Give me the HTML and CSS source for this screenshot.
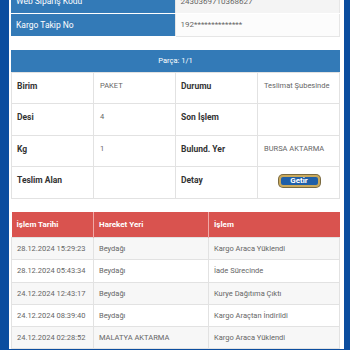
FILE: index.html
```html
<!DOCTYPE html>
<html lang="tr">
<head>
    <meta charset="UTF-8">
    <meta name="viewport" content="width=device-width, initial-scale=1.0">
    <title>Kargo Takip</title>
    <link rel="stylesheet" href="styles.css">
</head>
<body>
    <div class="page">
        <table class="info-table">
            <tr>
                <th>Web Sipariş Kodu</th>
                <td>2430369710368627</td>
            </tr>
            <tr>
                <th>Kargo Takip No</th>
                <td>192**************</td>
            </tr>
        </table>

        <div class="panel">
            <div class="panel-head">Parça: 1/1</div>
            <table class="part-table">
                <tr>
                    <th>Birim</th>
                    <td>PAKET</td>
                    <th>Durumu</th>
                    <td>Teslimat Şubesinde</td>
                </tr>
                <tr>
                    <th>Desi</th>
                    <td>4</td>
                    <th>Son İşlem</th>
                    <td></td>
                </tr>
                <tr>
                    <th>Kg</th>
                    <td>1</td>
                    <th>Bulund. Yer</th>
                    <td>BURSA AKTARMA</td>
                </tr>
                <tr>
                    <th>Teslim Alan</th>
                    <td></td>
                    <th>Detay</th>
                    <td class="btn-cell"><button class="getir-btn">Getir</button></td>
                </tr>
            </table>
        </div>

        <table class="moves-table">
            <thead>
                <tr>
                    <th class="col-date">İşlem Tarihi</th>
                    <th class="col-place">Hareket Yeri</th>
                    <th>İşlem</th>
                </tr>
            </thead>
            <tbody>
                <tr>
                    <td>28.12.2024 15:29:23</td>
                    <td>Beydağı</td>
                    <td>Kargo Araca Yüklendi</td>
                </tr>
                <tr>
                    <td>28.12.2024 05:43:34</td>
                    <td>Beydağı</td>
                    <td>İade Sürecinde</td>
                </tr>
                <tr>
                    <td>24.12.2024 12:43:17</td>
                    <td>Beydağı</td>
                    <td>Kurye Dağıtıma Çıktı</td>
                </tr>
                <tr>
                    <td>24.12.2024 08:39:40</td>
                    <td>Beydağı</td>
                    <td>Kargo Araçtan İndirildi</td>
                </tr>
                <tr>
                    <td>24.12.2024 02:28:52</td>
                    <td>MALATYA AKTARMA</td>
                    <td>Kargo Araca Yüklendi</td>
                </tr>
            </tbody>
        </table>
    </div>
</body>
</html>
```

FILE: styles.css
```css
:root {
    --frame: #0b4d9f;
    --blue: #337ab7;
    --red: #d9534f;
    --line: #e2e2e2;
    --label: #333;
    --value: #666;
}

* {
    box-sizing: border-box;
    margin: 0;
    padding: 0;
}

html, body {
    height: 100%;
}

body {
    background: var(--frame);
    font-family: Roboto, "Noto Sans", sans-serif;
    overflow: hidden;
}

.page {
    margin-left: 9px;
    width: 335px;
    min-height: 100%;
    background: #fff;
    padding: 0 4px 0 2px;
    margin-top: -10px;
}

table {
    width: 100%;
    border-collapse: collapse;
    table-layout: fixed;
}

/* top info */
.info-table th,
.info-table td {
    height: 23px;
    font-size: 8px;
    text-align: left;
    padding: 0 5px;
    border-bottom: 1px solid #fff;
}

.info-table th {
    width: 164px;
    background: var(--blue);
    color: #fff;
    font-weight: 400;
    font-size: 8.5px;
}

.info-table td {
    color: var(--value);
    background: #f4f4f4;
    border-left: 1px solid #e6e6e6;
    border-right: 1px solid #e6e6e6;
}

.info-table tr:nth-child(2) td {
    background: #fcfcfc;
    border-bottom: 1px solid #e6e6e6;
}

/* part panel */
.panel {
    margin-top: 13px;
}

.panel-head {
    background: var(--blue);
    color: #fff;
    font-size: 7.5px;
    text-align: center;
    height: 22px;
    line-height: 22px;
}

.part-table th,
.part-table td {
    height: 31.5px;
    border: 1px solid var(--line);
    text-align: left;
    vertical-align: top;
    padding: 8px 5px 0;
}

.part-table th {
    font-size: 8.5px;
    color: var(--label);
    font-weight: 700;
}

.part-table td {
    font-size: 7.5px;
    color: var(--value);
    padding-left: 6px;
}

.part-table .btn-cell {
    text-align: center;
    padding-top: 8px;
}

.getir-btn {
    font-family: Roboto, "Noto Sans", sans-serif;
    font-size: 8px;
    font-weight: 700;
    color: #fff;
    background: #1f5fa8;
    border: 2px solid #c9a95c;
    border-radius: 4px;
    width: 41px;
    height: 12px;
    line-height: 8px;
    box-shadow: 0 0 0 1px #7a6a40;
}

/* movements */
.moves-table {
    margin-top: 13px;
}

.moves-table th {
    background: var(--red);
    color: #fff;
    font-size: 8px;
    font-weight: 700;
    text-align: left;
    height: 26px;
    padding: 0 5px;
    border-right: 1px solid #f0a9a7;
}

.moves-table th:last-child {
    border-right: none;
}

.moves-table .col-date {
    width: 82px;
}

.moves-table .col-place {
    width: 115px;
}

.moves-table td {
    font-size: 7.5px;
    color: var(--value);
    height: 22.3px;
    padding: 0 5px;
    border: 1px solid var(--line);
    white-space: nowrap;
    overflow: hidden;
}

.moves-table tbody tr:nth-child(odd) td {
    background: #f7f7f7;
}
```
